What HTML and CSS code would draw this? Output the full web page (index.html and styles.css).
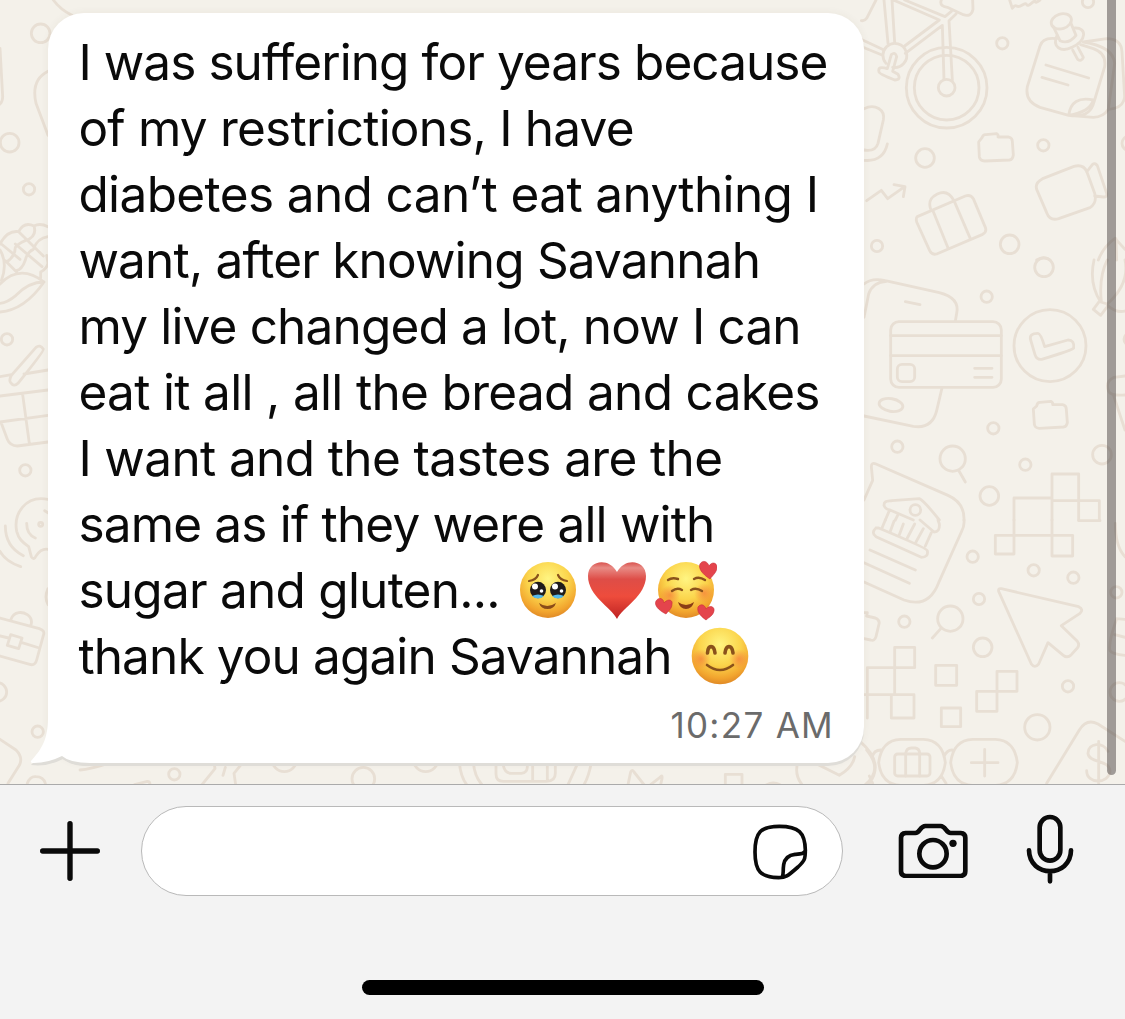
FILE: index.html
```html
<!DOCTYPE html>
<html lang="en">
<head>
<meta charset="utf-8">
<title>Chat</title>
<link rel="stylesheet" href="styles.css">
</head>
<body>
<div class="screen">
  <main class="chat">
    <svg class="wallpaper" viewBox="0 0 1125 784" aria-hidden="true">
      <!-- bicycle, pinned note, luggage, video camera -->
      <g transform="translate(860 0) scale(.33333)">
        <circle cx="260" cy="263" r="121"/><circle cx="260" cy="263" r="97"/><circle cx="260" cy="263" r="25"/>
        <path d="M252 238L247 76L136 160M277 240L267 62L288 42M72 0L84 130M96 0L104 128M100 0L238 60L134 138M134 0L255 50L274 34M0 116L72 150M0 138L66 165M4 62Q14 64 20 55L48 0M244 0C238 16 250 20 262 22L310 44Q334 52 339 28L338 0"/>
        <path d="M98 202A36 36 0 1 0 80 140A36 36 0 0 0 78 190M94 164L82 206Q52 196 57 216Q58 222 104 240Q124 240 114 223L98 214L110 170Q106 154 94 164"/>
        <path d="M449 0L457 25Q464 14 470 18T487 15T500 14T514 10T526 5T540 0"/>
        <circle cx="684" cy="6" r="17"/><circle cx="427" cy="130" r="17"/><circle cx="195" cy="474" r="28"/><circle cx="550" cy="436" r="17"/><circle cx="449" cy="733" r="28"/><circle cx="51" cy="738" r="17"/><circle cx="808" cy="430" r="22"/>
        <path d="M590 116Q548 110 540 138L502 260Q494 304 540 322L626 346Q690 356 702 306L734 200Q740 160 700 146L662 134M626 346Q634 286 700 300Q690 336 626 346M626 346L700 352Q730 352 745 328L764 190Q760 140 670 126L740 116Q784 116 786 156L794 290Q790 326 745 328M558 195L686 234M546 232L624 255"/>
        <ellipse cx="604" cy="64" rx="31" ry="22" transform="rotate(-18 604 64)"/><path d="M580 80L600 122Q626 134 648 106L632 68M592 104C574 142 604 158 636 142C680 122 682 82 644 84M638 150L653 178Q664 186 670 172L654 142"/>
        <path d="M12 326C46 310 76 330 70 360L54 430Q46 456 12 450M12 481Q70 486 82 432M20 602L64 571L83 596L134 560M102 554L135 560L130 590"/>
        <path d="M356 426L366 413Q370 402 378 404L410 401Q416 405 414 411L446 411Q457 414 457 424L460 465Q458 479 448 480L374 483Q360 482 358 470Z"/>
        <path d="M172 650L316 588Q332 583 340 596L376 682Q381 696 368 703L230 762Q216 766 209 752L170 666Q167 654 172 650M218 630L265 746M282 602L331 716M213 630C202 602 216 590 232 582C252 572 268 576 282 602"/>
        <path d="M548 536L642 499Q670 492 680 514L704 580Q712 608 690 623L596 656Q570 664 560 638L530 568Q524 548 548 536M680 516L697 494Q705 487 712 497L740 580Q742 592 730 591L704 588M530 780Q552 766 570 780M715 780Q730 740 765 715L795 748M768 716L770 780"/>
      </g>
      <!-- phone and card, check mark, documents -->
      <g transform="translate(860 260) scale(.33333)">
        <circle cx="552" cy="22" r="28"/><circle cx="380" cy="110" r="17"/><circle cx="570" cy="257" r="108"/><circle cx="400" cy="505" r="17"/><circle cx="112" cy="560" r="17"/><circle cx="278" cy="596" r="38"/><circle cx="496" cy="614" r="17"/><circle cx="388" cy="708" r="28"/><circle cx="726" cy="584" r="28"/><circle cx="810" cy="238" r="18"/>
        <path d="M297 633L316 666M12 72Q36 52 76 62L238 98Q300 114 290 160L286 184M12 172L26 102Q38 66 80 64M246 384L230 452Q216 508 160 499L12 468M136 125L180 134"/>
        <rect x="92" y="185" width="332" height="197" rx="25"/><path d="M92 227H424M92 287H424M344 325H396M344 352H396"/><rect x="112" y="313" width="52" height="52" rx="14"/><ellipse cx="93" cy="435" rx="36" ry="19" transform="rotate(10 93 435)"/>
        <path d="M512 240Q506 220 534 220Q542 220 554 260L624 240Q644 240 641 264Q638 270 545 298Q530 300 525 284Z"/>
        <path d="M520 447L530 438Q532 426 540 427L572 424Q580 428 578 434L608 434Q619 436 619 448L622 488Q620 500 610 501L538 505Q524 504 523 492Z"/>
        <path d="M12 720L38 661L34 620Q34 606 48 612L264 706Q314 728 312 780M462 780V714H576V642H656V722H718V780M576 714V780M576 722H656V780M72 736C72 722 82 724 96 722L178 716Q190 720 238 780M72 736Q76 748 90 750L160 780M88 752L76 780M114 764L106 780"/><circle cx="166" cy="750" r="16"/>
        <path d="M702 0Q686 70 722 126L742 132Q810 70 795 0M742 0Q716 50 724 124M742 136Q770 160 795 153M718 124L700 148L722 166L742 140M795 348L762 352Q734 366 746 394Q752 408 795 405M760 404L795 510"/>
      </g>
      <!-- cursor, blocks, round badges -->
      <g transform="translate(860 520) scale(.33333)">
        <circle cx="338" cy="110" r="17"/><circle cx="521" cy="151" r="17"/><circle cx="640" cy="173" r="17"/><circle cx="357" cy="237" r="17"/><circle cx="133" cy="305" r="17"/><circle cx="271" cy="296" r="38"/><circle cx="368" cy="382" r="28"/><circle cx="624" cy="499" r="17"/><circle cx="532" cy="622" r="38"/><circle cx="769" cy="217" r="17"/><circle cx="778" cy="516" r="28"/>
        <path d="M312 0Q314 18 304 36L236 188Q206 266 132 240L12 186M12 128L148 190M30 90L166 150M48 24Q32 38 48 50L184 112Q206 112 202 92Q200 84 56 24L48 24M180 0L222 36Q240 36 238 12L234 0M76 0L66 24M102 4L91 34M130 12L118 44M164 12L142 54M190 26L168 66M214 38L196 78M462 0V102H406V46H638V108H576V0M656 2H720M243 325L217 354"/>
        <path d="M424 206L656 260Q672 268 660 280L604 317L652 364Q660 374 652 384L634 404Q622 416 610 406L564 368L536 432Q524 446 514 432L416 214Q414 204 424 206"/>
        <path d="M104 524V382H164V443H22V524H162V594H94V524M12 524H22V594M227 436H290V496H227ZM244 564H302V620H244ZM411 454H471V514H411ZM350 514H411V574H350ZM12 278H22L20 288L46 294Q60 300 57 312L48 350Q44 364 32 360L12 356"/>
        <path d="M56 728Q64 660 122 658H190Q248 660 256 728Q248 794 190 796H122Q64 794 56 728M272 728Q280 660 338 658H406Q464 660 472 728Q464 794 406 796H338Q280 794 272 728M0 664Q74 728 28 790M36 712Q42 690 62 690M252 710Q260 690 276 690M28 768L38 790M244 768L258 790"/>
        <rect x="104" y="702" width="106" height="66" rx="9"/><path d="M137 768V700Q140 684 154 684H166Q178 686 179 700V768M374 688V768M334 728H414M560 790L658 630Q680 594 714 612L795 664M716 664V790M744 694C730 664 684 668 684 700C686 730 750 718 750 754C746 792 680 794 680 752M770 296Q744 370 750 392Q756 402 795 406M770 296L795 298M764 344L795 352M766 10Q766 80 795 110"/>
      </g>
      <!-- left edge: fruit, gift, briefcase -->
      <g transform="scale(.33333)">
        <circle cx="122" cy="100" r="28"/><circle cx="29" cy="428" r="28"/><circle cx="87" cy="568" r="17"/><circle cx="21" cy="1018" r="17"/>
        <path d="M160 0Q180 28 216 46M0 145L8 290Q8 304 0 312M144 214Q92 240 108 310L144 406M0 732Q22 690 56 695Q72 664 102 678Q120 668 144 680M56 695L130 768M46 732L126 800M4 732L60 778M16 782L50 816M102 678Q112 710 76 722Q56 730 46 742Q46 768 20 786M144 710Q112 714 100 748Q82 756 76 780Q66 810 48 812M140 766L144 790Q140 806 122 816V834M0 750Q24 790 4 842M0 852Q60 790 132 846Q74 930 0 936M132 846Q86 846 48 886Q22 908 0 910M34 1126L108 1042Q120 1032 130 1048Q132 1054 54 1150Q42 1162 32 1148Q26 1142 34 1126M0 1130L34 1124M72 1122L144 1110M0 1188L144 1170M68 1184L88 1330M0 1266L144 1246M4 1270L22 1318Q30 1338 52 1338L144 1326"/>
      </g>
      <g transform="translate(0 400) scale(.33333)">
        <circle cx="76" cy="211" r="17"/><circle cx="122" cy="373" r="6"/><circle cx="113" cy="995" r="17"/><circle cx="-8" cy="876" r="28"/><path d="M144 298C76 284 40 342 50 394C56 416 66 426 86 440L94 470Q102 482 108 468Q124 444 144 448M134 332L144 338M80 370Q80 404 106 414M16 378Q16 440 70 467M0 454Q16 484 62 500M144 566Q132 592 144 614M0 654L118 686Q136 692 130 706L110 780Q106 796 92 794L0 768M32 660C42 630 70 636 82 644Q100 656 92 678M0 708L26 714M66 728L118 744M32 704L66 714L56 746L22 736ZM0 1018L48 1050Q70 1072 58 1096L24 1150M82 1150Q90 1128 108 1130Q130 1130 136 1150"/>
      </g>
      <!-- strip along the bottom -->
      <g transform="translate(80 750) scale(.33333)">
        <circle cx="283" cy="73" r="17"/><circle cx="613" cy="28" r="37"/><circle cx="850" cy="86" r="34"/><circle cx="1037" cy="28" r="37"/><path d="M0 60Q30 58 84 40M164 104L202 94Q210 94 210 104M402 36L405 56L366 104M436 52L429 76M488 38L462 70L467 104M1138 38Q1142 80 1160 104M1180 38Q1184 80 1206 104"/>
        <path d="M1248 38V72Q1248 94 1270 94H1400Q1426 94 1426 70V38M1270 38V46Q1274 70 1294 70H1324Q1342 68 1342 50V38M1358 38V94M1402 38V94M1494 38L1464 104M1534 38Q1526 80 1512 104M1644 104L1652 66Q1656 56 1662 66L1692 104M1712 104L1740 82Q1748 72 1746 86L1742 104M1936 104V73H1986V104M2060 104Q2080 94 2100 104M2156 30Q2140 70 2166 104M2206 40L2278 76Q2318 52 2324 20M2360 0Q2410 60 2356 104"/>
      </g>
    </svg>
    <article class="bubble">
      <svg class="tail" viewBox="0 0 60 50" aria-hidden="true"><path class="tail-shade" d="M18 7C18 28 14 39 1 52Q18 54 33 46Q43 53 60 53V7Z"/><path class="tail-fill" d="M18 4C18 26 12 36 1 48Q0 50 4 50Q18 50 32 43Q40 50 60 50V4Z"/></svg>
      <p class="message">
        <span class="line l1">I was suffering for years because</span>
        <span class="line l2">of my restrictions, I have</span>
        <span class="line l3">diabetes and can’t eat anything I</span>
        <span class="line l4">want, after knowing Savannah</span>
        <span class="line l5">my live changed a lot, now I can</span>
        <span class="line l6">eat it all , all the bread and cakes</span>
        <span class="line l7">I want and the tastes are the</span>
        <span class="line l8">same as if they were all with</span>
        <span class="line l9"><span class="words">sugar and gluten...</span><svg class="emoji-row" viewBox="0 0 207 66" role="img" aria-label="Touched face, red heart, smiling face with hearts">
          <defs>
            <radialGradient id="face" cx=".5" cy=".3" r=".72"><stop offset="0" stop-color="#fff582"/><stop offset=".5" stop-color="#fbd54c"/><stop offset=".82" stop-color="#f2a52e"/><stop offset="1" stop-color="#dd8525"/></radialGradient>
            <linearGradient id="heart" x1="0" y1="0" x2="0" y2="1"><stop offset="0" stop-color="#d9534f"/><stop offset=".1" stop-color="#e88b85"/><stop offset=".3" stop-color="#de4d47"/><stop offset=".6" stop-color="#ee4c3c"/><stop offset="1" stop-color="#be2222"/></linearGradient>
            <radialGradient id="blush"><stop offset="0" stop-color="#f5763b" stop-opacity=".65"/><stop offset="1" stop-color="#f5763b" stop-opacity="0"/></radialGradient>
          </defs>
          <circle cx="38" cy="33" r="28" fill="url(#face)"/>
          <g fill="none" stroke="#8a521b" stroke-width="2.2" stroke-linecap="round"><path d="M19 24Q26 23 28 18M48 18Q50 23 57 24"/></g>
          <ellipse cx="28" cy="33" rx="8" ry="8.3" fill="#201c1b"/><ellipse cx="48" cy="33" rx="8" ry="8.3" fill="#201c1b"/>
          <path d="M22 39Q28 36 34 39Q28 44 22 39M42 39Q48 36 54 39Q48 44 42 39" fill="#55b9ea"/>
          <g fill="#fff"><circle cx="25" cy="29.500" r="3"/><circle cx="45" cy="29.500" r="3"/><circle cx="31.500" cy="34" r="1.800"/><circle cx="51.500" cy="34" r="1.800"/></g>
          <path d="M29 46Q37 52 46 46Q44 52 37.500 52T29 46" fill="#8a4b18"/>
          <path d="M107 62C101 50 78 39 78 19C78 3 99 0 107 15C115 0 136 3 136 19C136 39 113 50 107 62Z" fill="url(#heart)"/>
          <circle cx="176" cy="33" r="28" fill="url(#face)"/>
          <circle cx="160" cy="38" r="10" fill="url(#blush)"/><circle cx="194" cy="36" r="10" fill="url(#blush)"/>
          <g fill="none" stroke="#8a521b" stroke-width="2.4" stroke-linecap="round"><path d="M158 23Q162 20 168 22M184 22Q189 19 195 23M162 34Q167 30 172 33M181 33Q186 30 192 34"/></g>
          <path d="M168 45Q176 51 184 45Q182 52 176 52T168 45" fill="#8a3d16"/>
          <g fill="#e4444c" stroke="#c92e38" stroke-width=".6"><path d="M200 22C192 17 188 11 190 7C193 2 198 5 199 9C202 4 207 6 207 10C207 15 203 18 200 22ZM156 57C148 53 144 48 146 44C149 39 154 42 154 46C158 41 163 43 162 47C162 52 158 54 156 57ZM196 63C189 58 187 54 188 50C191 46 195 48 196 52C199 48 205 49 204 54C203 59 199 60 196 63Z"/></g>
        </svg></span>
        <span class="line l10"><span class="words">thank you again Savannah</span><svg class="emoji" viewBox="0 0 66 66" role="img" aria-label="Smiling face">
          <circle cx="33" cy="33" r="28.300" fill="url(#face)"/><circle cx="14" cy="36" r="10" fill="url(#blush)"/><circle cx="52" cy="36" r="10" fill="url(#blush)"/>
          <g fill="none" stroke="#8a521b" stroke-linecap="round"><path stroke-width="3.600" d="M20.500 30C21 21.500 27 21.500 28 30M38 30C39 21.500 45 21.500 46 30"/><path stroke-width="2.600" d="M20 42Q33 52 46 42"/></g>
        </svg></span>
      </p>
      <time class="stamp">10:27 AM</time>
    </article>
    <div class="scrollbar"></div>
  </main>
  <footer class="composer">
    <div class="bar">
      <svg class="icon plus" viewBox="0 0 60 60"><path d="M30 2.700V57.300M2.700 30H57.300"/></svg>
      <div class="field">
        <svg class="icon sticker" viewBox="0 0 168 168"><path d="M82 7C26 7 9 25 9 84C9 142 26 160 80 161C101 161 105 158 138 129C158 110 160 106 160 78C159 25 140 7 82 7ZM90 160C96 152 92 142 95 122Q100 94 129 91C148 90 155 90 160 80"/></svg>
      </div>
      <svg class="icon camera" viewBox="0 0 210 166"><path d="M23 30H52C66 30 66 9 82 9H128C143 9 144 30 158 30H188Q202 31 202 44V145Q202 158 188 159H23Q9 158 9 145V44Q9 31 23 30Z"/><circle cx="105" cy="92" r="41"/><circle class="dot" cx="165" cy="61" r="11"/></svg>
      <svg class="icon mic" viewBox="0 0 144 210"><rect x="41" y="9" width="62" height="131" rx="31"/><path d="M9 109C10 192 134 192 135 109M72 172V202"/></svg>
    </div>
    <div class="home"></div>
  </footer>
</div>
</body>
</html>
```

FILE: styles.css
```css
* { box-sizing: border-box; }
body { margin: 0; font-family: Inter, "Liberation Sans", sans-serif; }
.screen { width: 1125px; height: 1019px; display: flex; flex-direction: column; overflow: hidden; background: #f3f3f3; }
.chat { position: relative; height: 784px; padding: 13px 0 0 48px; background: #f4f1ea; overflow: hidden; }
.wallpaper { position: absolute; inset: 0; width: 1125px; height: 784px; fill: none; stroke: #e8dfd4; stroke-width: 8.5; stroke-linecap: round; stroke-linejoin: round; }
.bubble { position: relative; width: 816px; height: 750px; padding: 16px 32px 0 30.4px; display: flex; flex-direction: column; background: #fff; border-radius: 36px; box-shadow: 0 3px 0 #dfddd8, 0 0 8px rgba(80, 60, 30, .06); }
.tail { position: absolute; left: -18px; bottom: 0; width: 60px; height: 50px; overflow: visible; }
.tail-fill { fill: #fff; }
.tail-shade { fill: #dfddd8; }
.message { position: relative; margin: 0; color: #0a0a0a; font-size: 49.5px; line-height: 66px; white-space: nowrap; }
.line { display: flex; height: 66px; }
.l1 { letter-spacing: -.93px; }
.l2 { letter-spacing: -.78px; }
.l3 { letter-spacing: -.61px; }
.l4 { letter-spacing: -.81px; }
.l5 { letter-spacing: -.84px; }
.l6 { letter-spacing: -.67px; }
.l7 { letter-spacing: -.62px; }
.l8 { letter-spacing: -.82px; }
.l9 { letter-spacing: -.75px; }
.l10 { letter-spacing: -.87px; }
.emoji-row { width: 207px; height: 66px; margin-left: 10px; }
.emoji { width: 66px; height: 66px; margin-left: 15px; }
.stamp { align-self: flex-end; margin: 12px -2px 0 0; font-size: 35px; line-height: 48px; letter-spacing: 1.3px; color: #6b6b6b; }
.scrollbar { position: absolute; right: 9px; top: -10px; width: 9px; height: 785px; border-radius: 5px; background: rgba(75, 70, 67, .5); }
.composer { flex: 1; display: flex; flex-direction: column; align-items: center; border-top: 1px solid #aaa; background: #f3f3f3; }
.bar { width: 100%; height: 134px; padding: 21px 50px 0 40px; display: flex; }
.icon { fill: none; stroke: #0a0a0a; stroke-linecap: round; stroke-linejoin: round; flex: none; }
.plus { width: 60px; height: 60px; margin-top: 15px; stroke-width: 5.4; }
.field { width: 702px; height: 90px; margin-left: 41px; padding: 17px 34px 0 0; display: flex; justify-content: flex-end; border: 1px solid #b9b9b9; border-radius: 45px; background: #fff; }
.sticker { width: 56px; height: 56px; stroke-width: 11; }
.camera { width: 70px; height: 55.3px; margin: 17px 0 0 55px; stroke-width: 14; }
.dot { fill: #0a0a0a; stroke: none; }
.mic { width: 48px; height: 70px; margin: 8px 0 0 58px; stroke-width: 14; }
.home { width: 402px; height: 15px; margin-top: 61px; border-radius: 8px; background: #000; }
```
